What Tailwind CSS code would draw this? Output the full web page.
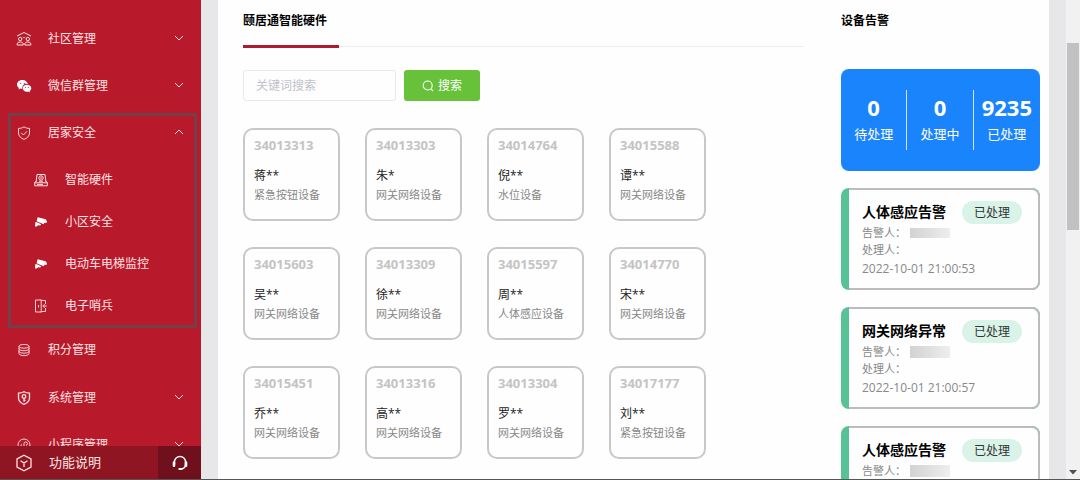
<!DOCTYPE html>
<html lang="zh-CN">
<head>
<meta charset="utf-8">
<title>颐居通智能硬件</title>
<script src="https://cdn.jsdelivr.net/npm/@tailwindcss/browser@4"></script>
</head>
<body class="flex h-screen overflow-hidden border-b border-[#555] bg-[#e7e7e9] font-['Open_Sans','Noto_Sans_CJK_SC',sans-serif] text-xs text-[#222]">

<svg class="hidden">
  <symbol id="down" viewBox="0 0 10 6"><path d="M1 1l4 4 4-4" fill="none" stroke="currentColor" stroke-width="1"/></symbol>
  <symbol id="camera" viewBox="0 0 16 14"><path fill="#fff" d="M4.600 2.200 12.600 4.300 14 6.200 13.400 8 11.600 7.800 10.600 9.200 3.600 6.200zM2.400 7 4.600 7.600 8.200 9.200 7.200 10.600 5.200 10.200 3.600 11.600H2z"/></symbol>
</svg>

<aside class="flex w-[201px] shrink-0 flex-col bg-[#b81a2c] text-[#ffe3e3]">
  <nav class="min-h-0 flex-1 overflow-hidden pt-[15px]">
    <a href="#" class="flex h-[47px] items-center pr-[17px] pl-4">
      <svg class="mr-4 size-4" viewBox="0 0 16 16" fill="none" stroke="currentColor"><path d="M1 5 8 1.500 15 5"/><circle cx="4.200" cy="8" r="1.700"/><circle cx="11.800" cy="8" r="1.700"/><path d="M1.200 14v-1c0-1.300 1-2 3-2s3 .7 3 2v1zM8.800 14v-1c0-1.300 1-2 3-2s3 .7 3 2v1zM7.300 6.500h1.400"/></svg>
      <span class="flex-1">社区管理</span><svg class="mb-[2px] h-[6px] w-[10px]"><use href="#down"/></svg>
    </a>
    <a href="#" class="flex h-[47px] items-center pr-[17px] pl-4">
      <svg class="mr-4 size-4" viewBox="0 0 16 16"><path fill="#fff" d="M6.500 2C3.300 2 1 4 1 6.500c0 1.400.8 2.600 2 3.400L2.500 11.600l2-1c.6.2 1.200.3 1.800.3A4.300 4.300 0 0 1 11.900 6C11.500 3.700 9.300 2 6.500 2z"/><path fill="#fff" d="M11 6.700c-2.500 0-4.300 1.600-4.300 3.500s1.900 3.500 4.300 3.500c.5 0 1-.1 1.500-.2l1.600.9-.4-1.500c1-.6 1.600-1.600 1.600-2.700 0-1.900-1.900-3.500-4.300-3.500z"/><g fill="#b81a2c"><circle cx="4.700" cy="5.300" r=".6"/><circle cx="8.300" cy="5.300" r=".6"/><circle cx="9.600" cy="9.400" r=".5"/><circle cx="12.400" cy="9.400" r=".5"/></g></svg>
      <span class="flex-1">微信群管理</span><svg class="mb-[2px] h-[6px] w-[10px]"><use href="#down"/></svg>
    </a>
    <section class="relative h-[217px]">
      <a href="#" class="mb-[2px] flex h-[48px] items-center pr-[17px] pl-4">
        <svg class="mr-4 size-4" viewBox="0 0 16 16" fill="none" stroke="currentColor" stroke-width=".9"><path d="M8 1.800c1.700 1.200 3.500 1.600 5.500 1.600V8c0 3-2.200 5-5.500 6.400C4.700 13 2.500 11 2.500 8V3.400c2 0 3.800-.4 5.500-1.600z"/><path d="m5.200 7.800 2.200 2.200 3.600-3.700"/></svg>
        <span class="flex-1">居家安全</span><svg class="mb-[2px] h-[6px] w-[10px] rotate-180"><use href="#down"/></svg>
      </a>
      <a href="#" class="flex h-[42px] items-center gap-4 pl-[33px]">
        <svg class="size-4" viewBox="0 0 16 16" fill="none" stroke="currentColor"><path d="M4 9.500 3.200 9 4 2.500h8l.8 6.500-.8.500M3.200 9 1.700 10.500v3.300h12.600v-3.300L12.800 9M1.700 10.800h12.600M4 12.400h6"/><circle cx="8" cy="6" r="2.200"/><path d="M8 5v2M6 9.200h4"/></svg>
        智能硬件
      </a>
      <a href="#" class="flex h-[42px] items-center gap-4 pl-[33px]"><svg class="h-[14px] w-4"><use href="#camera"/></svg>小区安全</a>
      <a href="#" class="flex h-[42px] items-center gap-4 pl-[33px]"><svg class="h-[14px] w-4"><use href="#camera"/></svg>电动车电梯监控</a>
      <a href="#" class="flex h-[42px] items-center gap-4 pl-[33px]">
        <svg class="size-4" viewBox="0 0 16 16" fill="none" stroke="currentColor" stroke-width=".9"><path d="M8.200 2H2.500v12h5.700M8.200 1.500v13M8.200 2.500h4.300V6M12.500 10v3.500H8.200M5.500 7v2.500M13.800 8H10m1.600-1.800L9.800 8l1.800 1.800"/></svg>
        电子哨兵
      </a>
      <div class="pointer-events-none absolute inset-x-0 top-1 bottom-[-2px] mr-1 ml-2 border-3 border-[#714049]"></div>
    </section>
    <a href="#" class="flex h-[48px] items-center pr-[17px] pl-4">
      <svg class="mr-4 size-4" viewBox="0 0 16 16" fill="none" stroke="currentColor" stroke-width=".9"><ellipse cx="8" cy="4.300" rx="5" ry="1.900"/><path d="M3 4.300v7.400c0 1 2.200 1.900 5 1.900s5-.9 5-1.900V4.300M3 6.800c0 1 2.200 1.900 5 1.900s5-.9 5-1.900M3 9.300c0 1 2.200 1.900 5 1.900s5-.9 5-1.900"/></svg>
      <span>积分管理</span>
    </a>
    <a href="#" class="flex h-[47px] items-center pr-[17px] pl-4">
      <svg class="mr-4 size-4" viewBox="0 0 16 16" fill="none" stroke="currentColor" stroke-width="1.300"><path d="M8 1.800c1.700 1 3.500 1.400 5.500 1.400V8c0 3-2.200 5-5.500 6.400C4.700 13 2.500 11 2.500 8V3.200c2 0 3.800-.4 5.500-1.400z"/><circle cx="8" cy="6.500" r="1.800"/><path d="M8 8.300v3.500M8 10.400h1.500"/></svg>
      <span class="flex-1">系统管理</span><svg class="mb-[2px] h-[6px] w-[10px]"><use href="#down"/></svg>
    </a>
    <a href="#" class="flex h-[47px] items-center pr-[17px] pl-4">
      <svg class="mr-4 size-4" viewBox="0 0 16 16" fill="none" stroke="currentColor" stroke-width=".9"><circle cx="8" cy="8" r="6"/><path d="M8 9.500a1.700 1.700 0 1 1-2-1.800M8 9.500v-3a1.700 1.700 0 1 1 2 1.800"/></svg>
      <span class="flex-1">小程序管理</span><svg class="mb-[2px] h-[6px] w-[10px]"><use href="#down"/></svg>
    </a>
  </nav>
  <footer class="flex h-[33px] shrink-0 text-[13px]">
    <a href="#" class="flex flex-1 items-center gap-4 bg-[#901522] pl-[15px]">
      <svg class="size-[18px]" viewBox="0 0 18 18" fill="none" stroke="currentColor" stroke-width="1.300"><path d="M9 1.200 16 5v8l-7 3.800L2 13V5zM5.500 6.800 9 9l3.500-2.200M9 9v4"/></svg>
      功能说明
    </a>
    <button type="button" aria-label="客服" class="flex w-[43px] items-center justify-center bg-[#70101c]">
      <svg class="size-4" viewBox="0 0 16 16" fill="none" stroke="#fff"><path d="M2.500 9V7a5.500 5.500 0 0 1 11 0v2c0 3-1.500 4.600-4 5" stroke-width="1.400"/><path d="M2 7.500v3.200M14 7.500v3.200" stroke-width="2.600" stroke-linecap="round"/><path d="M7.300 14h2.200" stroke-width="2" stroke-linecap="round"/></svg>
    </button>
  </footer>
</aside>

<main class="mx-[17px] flex min-w-0 flex-1 items-start gap-[37px] bg-[#fefefe] pr-[9px] pl-[25px]">
  <section class="min-w-0 flex-1">
    <div class="flex h-[47px] border-b border-[#eee]">
      <h1 class="h-[48px] w-24 border-b-3 border-[#ab1b32] pt-3 text-xs leading-[18px] font-bold whitespace-nowrap text-black">颐居通智能硬件</h1>
    </div>
    <form class="mt-[23px] flex h-[31px] gap-[8px]">
      <input type="text" aria-label="关键词搜索" placeholder="关键词搜索" class="w-[153px] rounded-[3px] border border-[#e8e8ea] px-3 text-xs outline-none placeholder:text-[#bfc2c8]">
      <button type="button" class="flex w-[76px] items-center justify-center gap-1 rounded-[3px] bg-[#67c23a] text-white">
        <svg class="size-3" viewBox="0 0 12 12" fill="none" stroke="currentColor" stroke-width="1.100"><circle cx="5.700" cy="5.500" r="4.500"/><path d="m9 9 2 2"/></svg>搜索
      </button>
    </form>
    <div class="mt-[27px] grid grid-cols-[repeat(auto-fill,97px)] gap-x-[25px] gap-y-[26px] pr-[80px]">
      <article class="h-[93px] rounded-[10px] border-2 border-[#c8c8c8] px-[9px] pt-[6px]"><p class="text-[13px] leading-[18px] font-bold text-[#c4c4c4]">34013313</p><h2 class="mt-[13px] leading-[18px]">蒋**</h2><p class="text-[11px] leading-[20px] text-[#888]">紧急按钮设备</p></article>
      <article class="h-[93px] rounded-[10px] border-2 border-[#c8c8c8] px-[9px] pt-[6px]"><p class="text-[13px] leading-[18px] font-bold text-[#c4c4c4]">34013303</p><h2 class="mt-[13px] leading-[18px]">朱*</h2><p class="text-[11px] leading-[20px] text-[#888]">网关网络设备</p></article>
      <article class="h-[93px] rounded-[10px] border-2 border-[#c8c8c8] px-[9px] pt-[6px]"><p class="text-[13px] leading-[18px] font-bold text-[#c4c4c4]">34014764</p><h2 class="mt-[13px] leading-[18px]">倪**</h2><p class="text-[11px] leading-[20px] text-[#888]">水位设备</p></article>
      <article class="h-[93px] rounded-[10px] border-2 border-[#c8c8c8] px-[9px] pt-[6px]"><p class="text-[13px] leading-[18px] font-bold text-[#c4c4c4]">34015588</p><h2 class="mt-[13px] leading-[18px]">谭**</h2><p class="text-[11px] leading-[20px] text-[#888]">网关网络设备</p></article>
      <article class="h-[93px] rounded-[10px] border-2 border-[#c8c8c8] px-[9px] pt-[6px]"><p class="text-[13px] leading-[18px] font-bold text-[#c4c4c4]">34015603</p><h2 class="mt-[13px] leading-[18px]">吴**</h2><p class="text-[11px] leading-[20px] text-[#888]">网关网络设备</p></article>
      <article class="h-[93px] rounded-[10px] border-2 border-[#c8c8c8] px-[9px] pt-[6px]"><p class="text-[13px] leading-[18px] font-bold text-[#c4c4c4]">34013309</p><h2 class="mt-[13px] leading-[18px]">徐**</h2><p class="text-[11px] leading-[20px] text-[#888]">网关网络设备</p></article>
      <article class="h-[93px] rounded-[10px] border-2 border-[#c8c8c8] px-[9px] pt-[6px]"><p class="text-[13px] leading-[18px] font-bold text-[#c4c4c4]">34015597</p><h2 class="mt-[13px] leading-[18px]">周**</h2><p class="text-[11px] leading-[20px] text-[#888]">人体感应设备</p></article>
      <article class="h-[93px] rounded-[10px] border-2 border-[#c8c8c8] px-[9px] pt-[6px]"><p class="text-[13px] leading-[18px] font-bold text-[#c4c4c4]">34014770</p><h2 class="mt-[13px] leading-[18px]">宋**</h2><p class="text-[11px] leading-[20px] text-[#888]">网关网络设备</p></article>
      <article class="h-[93px] rounded-[10px] border-2 border-[#c8c8c8] px-[9px] pt-[6px]"><p class="text-[13px] leading-[18px] font-bold text-[#c4c4c4]">34015451</p><h2 class="mt-[13px] leading-[18px]">乔**</h2><p class="text-[11px] leading-[20px] text-[#888]">网关网络设备</p></article>
      <article class="h-[93px] rounded-[10px] border-2 border-[#c8c8c8] px-[9px] pt-[6px]"><p class="text-[13px] leading-[18px] font-bold text-[#c4c4c4]">34013316</p><h2 class="mt-[13px] leading-[18px]">高**</h2><p class="text-[11px] leading-[20px] text-[#888]">网关网络设备</p></article>
      <article class="h-[93px] rounded-[10px] border-2 border-[#c8c8c8] px-[9px] pt-[6px]"><p class="text-[13px] leading-[18px] font-bold text-[#c4c4c4]">34013304</p><h2 class="mt-[13px] leading-[18px]">罗**</h2><p class="text-[11px] leading-[20px] text-[#888]">网关网络设备</p></article>
      <article class="h-[93px] rounded-[10px] border-2 border-[#c8c8c8] px-[9px] pt-[6px]"><p class="text-[13px] leading-[18px] font-bold text-[#c4c4c4]">34017177</p><h2 class="mt-[13px] leading-[18px]">刘**</h2><p class="text-[11px] leading-[20px] text-[#888]">紧急按钮设备</p></article>
    </div>
  </section>

  <section class="h-full w-[199px] shrink-0 overflow-hidden pt-3">
    <h2 class="leading-[18px] font-bold text-black">设备告警</h2>
    <dl class="mt-[39px] grid h-[102px] grid-cols-3 content-center divide-x divide-white/80 rounded-[8px] bg-[#1a84fd] text-center text-white">
      <div class="flex h-[60px] flex-col-reverse justify-center pb-1"><dt class="text-[13px] leading-[22px]">待处理</dt><dd class="text-[22px] leading-[32px] font-bold">0</dd></div>
      <div class="flex h-[60px] flex-col-reverse justify-center pb-1"><dt class="text-[13px] leading-[22px]">处理中</dt><dd class="text-[22px] leading-[32px] font-bold">0</dd></div>
      <div class="flex h-[60px] flex-col-reverse justify-center pb-1"><dt class="text-[13px] leading-[22px]">已处理</dt><dd class="text-[22px] leading-[32px] font-bold">9235</dd></div>
    </dl>
    <div class="mt-[17px] flex flex-col gap-[17px]">
      <article class="flex h-[102px] overflow-hidden rounded-[8px] bg-[#56c296]">
        <div class="ml-2 flex-1 rounded-r-[8px] border-2 border-l-0 border-[#bcbcbc] bg-[#fefefe] pt-[11px] pl-[13px] text-[11px] leading-[17px] text-[#888]">
          <div class="flex h-[23px] justify-between pr-[16px]"><h3 class="text-[14px] leading-[22px] font-bold text-black">人体感应告警</h3><span class="h-[23px] rounded-full bg-[#d9f3e8] px-3 text-xs leading-[23px] text-[#333]">已处理</span></div>
          <p class="flex items-center gap-[4px]">告警人：<span class="h-[10px] w-[40px] bg-linear-to-r from-[#d2d2d2] to-[#eee]"></span></p>
          <p>处理人：</p>
          <time class="block text-xs leading-[22px]">2022-10-01 21:00:53</time>
        </div>
      </article>
      <article class="flex h-[102px] overflow-hidden rounded-[8px] bg-[#56c296]">
        <div class="ml-2 flex-1 rounded-r-[8px] border-2 border-l-0 border-[#bcbcbc] bg-[#fefefe] pt-[11px] pl-[13px] text-[11px] leading-[17px] text-[#888]">
          <div class="flex h-[23px] justify-between pr-[16px]"><h3 class="text-[14px] leading-[22px] font-bold text-black">网关网络异常</h3><span class="h-[23px] rounded-full bg-[#d9f3e8] px-3 text-xs leading-[23px] text-[#333]">已处理</span></div>
          <p class="flex items-center gap-[4px]">告警人：<span class="h-[12px] w-[40px] bg-linear-to-r from-[#d2d2d2] to-[#eee]"></span></p>
          <p>处理人：</p>
          <time class="block text-xs leading-[22px]">2022-10-01 21:00:57</time>
        </div>
      </article>
      <article class="flex h-[102px] overflow-hidden rounded-[8px] bg-[#56c296]">
        <div class="ml-2 flex-1 rounded-r-[8px] border-2 border-l-0 border-[#bcbcbc] bg-[#fefefe] pt-[11px] pl-[13px] text-[11px] leading-[17px] text-[#888]">
          <div class="flex h-[23px] justify-between pr-[16px]"><h3 class="text-[14px] leading-[22px] font-bold text-black">人体感应告警</h3><span class="h-[23px] rounded-full bg-[#d9f3e8] px-3 text-xs leading-[23px] text-[#333]">已处理</span></div>
          <p class="flex items-center gap-[4px]">告警人：<span class="h-[12px] w-[40px] bg-linear-to-r from-[#d2d2d2] to-[#eee]"></span></p>
        </div>
      </article>
    </div>
  </section>
</main>

<div class="flex w-[14px] shrink-0 flex-col items-center justify-between bg-[#f1f1f1] pt-[43px] pb-[4px]" aria-hidden="true">
  <div class="h-[187px] w-3 bg-[#c1c1c1]"></div>
  <svg class="h-[5px] w-2" viewBox="0 0 8 5"><path d="M0 0h8L4 4.500z" fill="#505050"/></svg>
</div>
</body>
</html>
